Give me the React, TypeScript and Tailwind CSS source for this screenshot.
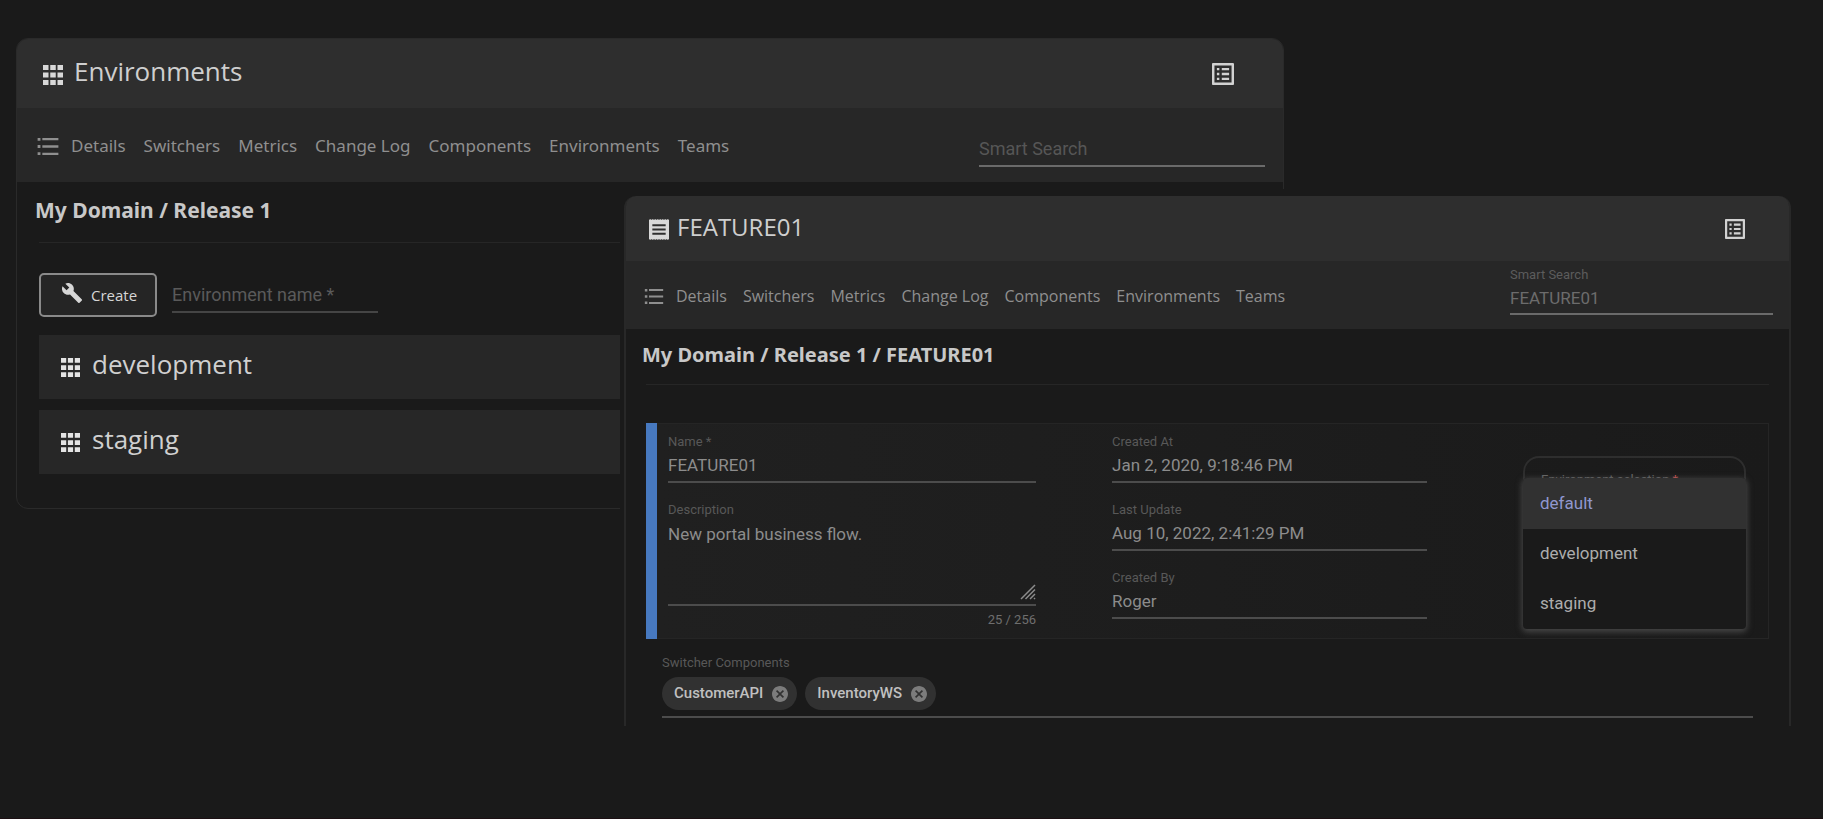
import React from "react";

const NAV = ["Details", "Switchers", "Metrics", "Change Log", "Components", "Environments", "Teams"];

type IconProps = { className?: string };

function AppsIcon({ className }: IconProps) {
  return (
    <svg viewBox="4 4 16 16" className={className} fill="currentColor" aria-hidden="true">
      <path d="M4 8h4.400V4H4v4zm5.800 12h4.400v-4H9.800v4zM4 20h4.400v-4H4v4zm0-6h4.400v-4H4v4zm5.800 0h4.400v-4H9.800v4zM15.600 4v4H20V4h-4.400zM9.800 8h4.400V4H9.800v4zm5.800 6H20v-4h-4.400v4zm0 6H20v-4h-4.400v4z" />
    </svg>
  );
}

function ReceiptIcon({ className }: IconProps) {
  return (
    <svg viewBox="3 2 18 20" preserveAspectRatio="none" className={className} fill="currentColor" aria-hidden="true">
      <path d="M18 17H6v-2h12v2zm0-4H6v-2h12v2zm0-4H6V7h12v2zM3 22l.75-1 .75 1 .75-1 .75 1 .75-1 .75 1 .75-1 .75 1 .75-1 .75 1 .75-1 .75 1 .75-1 .75 1 .75-1 .75 1 .75-1 .75 1 .75-1 .75 1 .75-1 .75 1 .75-1 .75 1V2l-.75 1-.75-1-.75 1-.75-1-.75 1-.75-1-.75 1-.75-1-.75 1-.75-1-.75 1-.75-1-.75 1-.75-1-.75 1-.75-1-.75 1-.75-1-.75 1-.75-1-.75 1-.75-1-.75 1L3 2v20z" />
    </svg>
  );
}

function ListAltIcon({ className }: IconProps) {
  return (
    <svg viewBox="3 3 18 18" className={className} fill="currentColor" aria-hidden="true">
      <path d="M19 5v14H5V5h14m1.100-2H3.900c-.5 0-.9.4-.9.9v16.200c0 .4.4.9.9.9h16.200c.4 0 .9-.5.9-.9V3.900c0-.5-.5-.9-.9-.9zM11 7h6v2h-6V7zm0 4h6v2h-6v-2zm0 4h6v2h-6zM7 7h2v2H7zm0 4h2v2H7zm0 4h2v2H7z" />
    </svg>
  );
}

function ListIcon({ className }: IconProps) {
  return (
    <svg viewBox="0 0 22 18" className={className} fill="currentColor" aria-hidden="true">
      <path d="M0 0h3v3H0zM5 0h17v2.500H5zM0 7.500h3v3H0zM5 7.700h17v2.500H5zM0 15h3v3H0zM5 15.500h17V18H5z" />
    </svg>
  );
}

function WrenchIcon({ className }: IconProps) {
  return (
    <svg viewBox="1 1 22 22" className={className} fill="currentColor" aria-hidden="true">
      <path d="M22.700 19l-9.100-9.100c.9-2.300.4-5-1.500-6.900-2-2-5-2.400-7.400-1.300L9 6 6 9 1.600 4.700C.4 7.100.9 10.100 2.900 12.100c1.900 1.900 4.600 2.400 6.900 1.500l9.100 9.100c.4.4 1 .4 1.400 0l2.300-2.300c.5-.4.5-1.100.1-1.400z" />
    </svg>
  );
}

function CancelIcon({ className }: IconProps) {
  return (
    <svg viewBox="2 2 20 20" className={className} fill="currentColor" aria-hidden="true">
      <path d="M12 2C6.470 2 2 6.470 2 12s4.470 10 10 10 10-4.470 10-10S17.530 2 12 2zm5 13.590L15.590 17 12 13.410 8.410 17 7 15.590 10.590 12 7 8.410 8.410 7 12 10.590 15.590 7 17 8.410 13.410 12 17 15.590z" />
    </svg>
  );
}

function NavLinks({ className }: IconProps) {
  return (
    <nav className={`flex items-center whitespace-nowrap text-[#8f8f8f] ${className}`}>
      {NAV.map((n) => (
        <a key={n} href="#">
          {n}
        </a>
      ))}
    </nav>
  );
}

function ReadField({ id, label, value }: { id: string; label: string; value: string }) {
  return (
    <div className="flex h-[68px] flex-col">
      <label htmlFor={id} className="text-[13px] leading-4 text-[#585858]">
        {label}
      </label>
      <input
        id={id}
        readOnly
        defaultValue={value}
        className="h-[33px] border-b-2 border-[#4c4c4c] bg-transparent pb-[2px] text-[17px] leading-6 text-[#8c8c8c] outline-none"
      />
    </div>
  );
}

function EnvironmentsWindow() {
  return (
    <section className="col-start-1 row-start-1 mt-[38px] mr-[539px] ml-4 self-start overflow-hidden rounded-xl border border-[#2a2a2a]">
      <header className="flex h-[69px] items-center bg-[#2e2e2e] pr-[49px] pl-[26px]">
        <AppsIcon className="mt-[2px] size-5 text-[#d8d8d8]" />
        <h1 className="mb-[6px] ml-[11px] text-[26px] leading-8 text-[#cfcfcf]">Environments</h1>
        <button aria-label="Show details" className="ml-auto text-[#d2d2d2]">
          <ListAltIcon className="size-[22px]" />
        </button>
      </header>
      <div className="flex h-[74px] items-center bg-[#272727] pr-[18px] pl-5">
        <ListIcon className="mt-[2px] h-[17px] w-[22px] text-[#8f8f8f]" />
        <NavLinks className="mt-[2px] ml-3 gap-[18px] font-['Noto_Sans'] text-[17px]" />
        <input
          aria-label="Smart Search"
          placeholder="Smart Search"
          className="mt-2 ml-auto h-9 w-[286px] border-b-2 border-[#6a6a6a] bg-transparent font-[Roboto] text-[18px] outline-none placeholder:text-[#565656]"
        />
      </div>
      <div className="px-[22px] pb-[34px]">
        <h2 className="-ml-1 pt-3 font-['Noto_Sans'] text-[21px] leading-8 font-bold text-[#c8c8c8]">My Domain / Release 1</h2>
        <hr className="mt-4 border-[#262626]" />
        <div className="mt-[30px] flex items-start">
          <button className="flex h-11 w-[118px] items-center rounded-[5px] border-2 border-[#8a8a8a] bg-[#252525] pl-[21px] text-[#d6d6d6]">
            <WrenchIcon className="mb-1 size-5" />
            <span className="ml-[9px] text-[15px]">Create</span>
          </button>
          <input
            aria-label="Environment name"
            placeholder="Environment name *"
            className="ml-[15px] h-10 w-[206px] border-b-2 border-[#454545] bg-transparent pt-1 font-[Roboto] text-[18px] outline-none placeholder:text-[#5a5a5a]"
          />
        </div>
        <ul className="mt-[18px] flex flex-col gap-[11px]">
          {["development", "staging"].map((e) => (
            <li key={e} className="flex h-16 items-center bg-[#272727] pl-[22px]">
              <AppsIcon className="size-[19px] text-[#e4e4e4]" />
              <span className="mb-[6px] ml-3 text-[26px] leading-8 text-[#d0d0d0]">{e}</span>
            </li>
          ))}
        </ul>
      </div>
    </section>
  );
}

function FeatureWindow() {
  return (
    <div className="col-start-1 row-start-1 mt-[189px] ml-[620px] self-start bg-[#1a1a1a] pt-[7px] pr-8 pl-1">
      <section className="rounded-t-xl border-x-2 border-[#282828]">
        <header className="flex h-[65px] items-center rounded-t-[10px] bg-[#2e2e2e] pr-11 pl-[23px]">
          <ReceiptIcon className="mt-[2px] h-[21px] w-5 text-[#d8d8d8]" />
          <h1 className="mb-1 ml-2 text-[24px] leading-8 text-[#cfcfcf]">FEATURE01</h1>
          <button aria-label="Show details" className="ml-auto text-[#d2d2d2]">
            <ListAltIcon className="size-5" />
          </button>
        </header>
        <div className="flex h-[68px] items-center bg-[#272727] pr-4 pl-[18px]">
          <ListIcon className="mt-[2px] h-[15px] w-5 text-[#8f8f8f]" />
          <NavLinks className="mt-[2px] ml-3 gap-4 text-base" />
          <div className="mb-2 ml-auto flex w-[263px] flex-col font-[Roboto]">
            <label htmlFor="search" className="text-[13px] leading-4 text-[#5c5c5c]">
              Smart Search
            </label>
            <input
              id="search"
              defaultValue="FEATURE01"
              className="h-8 border-b-2 border-[#6a6a6a] bg-transparent text-[17px] text-[#6c6c6c] outline-none"
            />
          </div>
        </div>
        <div className="px-5">
          <h2 className="-ml-1 pt-[10px] font-['Noto_Sans'] text-[20px] leading-8 font-bold text-[#c8c8c8]">
            My Domain / Release 1 / FEATURE01
          </h2>
          <hr className="mt-[13px] border-[#262626]" />
          <div className="mt-[38px] flex h-[216px] font-[Roboto]">
            <div className="w-[11px] bg-[#4779c0]" />
            <div className="flex flex-1 border border-l-0 border-[#252525] bg-gradient-to-r from-[#202020] to-[#1a1a1a] pr-[22px] pl-[11px]">
              <div className="w-[368px] pt-[10px]">
                <ReadField id="name" label="Name *" value="FEATURE01" />
                <div className="flex flex-col">
                  <label htmlFor="desc" className="text-[13px] leading-4 text-[#585858]">
                    Description
                  </label>
                  <div className="relative flex">
                    <textarea
                      id="desc"
                      defaultValue="New portal business flow."
                      className="h-[88px] w-full resize-none border-b-2 border-[#4c4c4c] bg-transparent pt-1 text-[17px] leading-6 text-[#8c8c8c] outline-none"
                    />
                    <svg viewBox="0 0 16 16" className="absolute right-0 bottom-[6px] size-4" stroke="#8c8c8c" strokeWidth="1.500" aria-hidden="true">
                      <path d="M1 15L15 1M5.500 15L15 5.500M10 15l5-5M14 15l1-1" />
                    </svg>
                  </div>
                  <span className="mt-1 self-end text-[13px] leading-5 text-[#6e6e6e]">25 / 256</span>
                </div>
              </div>
              <div className="ml-[76px] w-[315px] pt-[10px]">
                <ReadField id="created" label="Created At" value="Jan 2, 2020, 9:18:46 PM" />
                <ReadField id="updated" label="Last Update" value="Aug 10, 2022, 2:41:29 PM" />
                <ReadField id="by" label="Created By" value="Roger" />
              </div>
              <div className="relative mt-8 ml-auto h-20 w-[223px] rounded-[16px] border-2 border-[#2e2e2e] px-4 pt-[14px]">
                <div className="text-[13px] leading-4 text-[#6a6a6a]">
                  Environment selection <span className="text-[#e05a5a]">*</span>
                </div>
                <ul
                  role="listbox"
                  aria-label="Environment selection"
                  className="absolute top-5 -right-[2px] -left-[2px] overflow-hidden rounded-[4px] bg-[#1a1a1a] text-[17px] shadow-[0_2px_6px_1px_#484848]"
                >
                  <li role="option" aria-selected="true" className="flex h-[51px] items-center bg-[#313131] px-[17px] text-[#9097cf]">
                    default
                  </li>
                  <li role="option" aria-selected="false" className="flex h-[50px] items-center px-[17px] text-[#adadad]">
                    development
                  </li>
                  <li role="option" aria-selected="false" className="flex h-[50px] items-center px-[17px] text-[#adadad]">
                    staging
                  </li>
                </ul>
              </div>
            </div>
          </div>
          <div className="mr-4 ml-4 border-b-2 border-[#4c4c4c] pt-4 pb-[6px] font-[Roboto]">
            <div className="text-[13px] leading-4 text-[#585858]">Switcher Components</div>
            <div className="mt-[6px] flex gap-2">
              {["CustomerAPI", "InventoryWS"].map((c) => (
                <span key={c} className="flex h-[33px] items-center gap-[9px] rounded-full bg-[#313131] pr-[9px] pl-3 text-[15px] font-medium text-[#c0c0c0]">
                  {c}
                  <button aria-label={`Remove ${c}`} className="text-[#7c7c7c]">
                    <CancelIcon className="size-4" />
                  </button>
                </span>
              ))}
            </div>
          </div>
          <div className="h-2" />
        </div>
      </section>
    </div>
  );
}

export default function App() {
  return (
    <main className="grid min-h-screen grid-cols-1 border-b border-[#1c1013] bg-[#1a1a1a] font-['Open_Sans',sans-serif]">
      <EnvironmentsWindow />
      <FeatureWindow />
    </main>
  );
}
